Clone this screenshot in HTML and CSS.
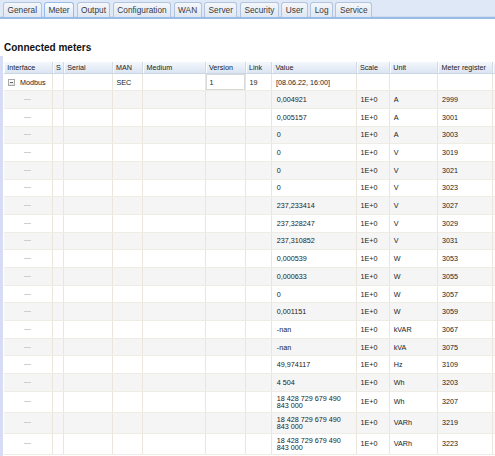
FILE: index.html
```html
<!DOCTYPE html>
<html>
<head>
<meta charset="utf-8">
<link rel="stylesheet" href="styles.css">
</head>
<body>
<div class="tabbar">
  <div class="tab">General</div>
  <div class="tab active">Meter</div>
  <div class="tab">Output</div>
  <div class="tab">Configuration</div>
  <div class="tab">WAN</div>
  <div class="tab">Server</div>
  <div class="tab">Security</div>
  <div class="tab">User</div>
  <div class="tab">Log</div>
  <div class="tab">Service</div>
</div>
<div class="content">
  <h1 class="title">Connected meters</h1>
  <div class="panel">
    <div class="grid">
      <div class="row head">
        <div class="c">Interface</div><div class="c">S</div><div class="c">Serial</div><div class="c">MAN</div><div class="c">Medium</div><div class="c">Version</div><div class="c">Link</div><div class="c">Value</div><div class="c">Scale</div><div class="c">Unit</div><div class="c">Meter register</div><div class="c"></div>
      </div>
      <div class="row top">
        <div class="c"><span class="exp"></span>Modbus</div><div class="c"></div><div class="c"></div><div class="c">SEC</div><div class="c"></div><div class="c boxed">1</div><div class="c">19</div><div class="c">[08.06.22, 16:00]</div><div class="c"></div><div class="c"></div><div class="c"></div><div class="c"></div>
      </div>
      <div class="row alt"><div class="c dash"><i></i></div><div class="c"></div><div class="c"></div><div class="c"></div><div class="c"></div><div class="c"></div><div class="c"></div><div class="c v">0,004921</div><div class="c">1E+0</div><div class="c">A</div><div class="c">2999</div><div class="c"></div></div>
      <div class="row"><div class="c dash"><i></i></div><div class="c"></div><div class="c"></div><div class="c"></div><div class="c"></div><div class="c"></div><div class="c"></div><div class="c v">0,005157</div><div class="c">1E+0</div><div class="c">A</div><div class="c">3001</div><div class="c"></div></div>
      <div class="row alt"><div class="c dash"><i></i></div><div class="c"></div><div class="c"></div><div class="c"></div><div class="c"></div><div class="c"></div><div class="c"></div><div class="c v">0</div><div class="c">1E+0</div><div class="c">A</div><div class="c">3003</div><div class="c"></div></div>
      <div class="row"><div class="c dash"><i></i></div><div class="c"></div><div class="c"></div><div class="c"></div><div class="c"></div><div class="c"></div><div class="c"></div><div class="c v">0</div><div class="c">1E+0</div><div class="c">V</div><div class="c">3019</div><div class="c"></div></div>
      <div class="row alt"><div class="c dash"><i></i></div><div class="c"></div><div class="c"></div><div class="c"></div><div class="c"></div><div class="c"></div><div class="c"></div><div class="c v">0</div><div class="c">1E+0</div><div class="c">V</div><div class="c">3021</div><div class="c"></div></div>
      <div class="row"><div class="c dash"><i></i></div><div class="c"></div><div class="c"></div><div class="c"></div><div class="c"></div><div class="c"></div><div class="c"></div><div class="c v">0</div><div class="c">1E+0</div><div class="c">V</div><div class="c">3023</div><div class="c"></div></div>
      <div class="row alt"><div class="c dash"><i></i></div><div class="c"></div><div class="c"></div><div class="c"></div><div class="c"></div><div class="c"></div><div class="c"></div><div class="c v">237,233414</div><div class="c">1E+0</div><div class="c">V</div><div class="c">3027</div><div class="c"></div></div>
      <div class="row"><div class="c dash"><i></i></div><div class="c"></div><div class="c"></div><div class="c"></div><div class="c"></div><div class="c"></div><div class="c"></div><div class="c v">237,328247</div><div class="c">1E+0</div><div class="c">V</div><div class="c">3029</div><div class="c"></div></div>
      <div class="row alt"><div class="c dash"><i></i></div><div class="c"></div><div class="c"></div><div class="c"></div><div class="c"></div><div class="c"></div><div class="c"></div><div class="c v">237,310852</div><div class="c">1E+0</div><div class="c">V</div><div class="c">3031</div><div class="c"></div></div>
      <div class="row"><div class="c dash"><i></i></div><div class="c"></div><div class="c"></div><div class="c"></div><div class="c"></div><div class="c"></div><div class="c"></div><div class="c v">0,000539</div><div class="c">1E+0</div><div class="c">W</div><div class="c">3053</div><div class="c"></div></div>
      <div class="row alt"><div class="c dash"><i></i></div><div class="c"></div><div class="c"></div><div class="c"></div><div class="c"></div><div class="c"></div><div class="c"></div><div class="c v">0,000633</div><div class="c">1E+0</div><div class="c">W</div><div class="c">3055</div><div class="c"></div></div>
      <div class="row"><div class="c dash"><i></i></div><div class="c"></div><div class="c"></div><div class="c"></div><div class="c"></div><div class="c"></div><div class="c"></div><div class="c v">0</div><div class="c">1E+0</div><div class="c">W</div><div class="c">3057</div><div class="c"></div></div>
      <div class="row alt"><div class="c dash"><i></i></div><div class="c"></div><div class="c"></div><div class="c"></div><div class="c"></div><div class="c"></div><div class="c"></div><div class="c v">0,001151</div><div class="c">1E+0</div><div class="c">W</div><div class="c">3059</div><div class="c"></div></div>
      <div class="row"><div class="c dash"><i></i></div><div class="c"></div><div class="c"></div><div class="c"></div><div class="c"></div><div class="c"></div><div class="c"></div><div class="c v">-nan</div><div class="c">1E+0</div><div class="c">kVAR</div><div class="c">3067</div><div class="c"></div></div>
      <div class="row alt"><div class="c dash"><i></i></div><div class="c"></div><div class="c"></div><div class="c"></div><div class="c"></div><div class="c"></div><div class="c"></div><div class="c v">-nan</div><div class="c">1E+0</div><div class="c">kVA</div><div class="c">3075</div><div class="c"></div></div>
      <div class="row"><div class="c dash"><i></i></div><div class="c"></div><div class="c"></div><div class="c"></div><div class="c"></div><div class="c"></div><div class="c"></div><div class="c v">49,974117</div><div class="c">1E+0</div><div class="c">Hz</div><div class="c">3109</div><div class="c"></div></div>
      <div class="row alt"><div class="c dash"><i></i></div><div class="c"></div><div class="c"></div><div class="c"></div><div class="c"></div><div class="c"></div><div class="c"></div><div class="c v">4 504</div><div class="c">1E+0</div><div class="c">Wh</div><div class="c">3203</div><div class="c"></div></div>
      <div class="row tall"><div class="c dash"><i></i></div><div class="c"></div><div class="c"></div><div class="c"></div><div class="c"></div><div class="c"></div><div class="c"></div><div class="c v wrap">18 428 729 679 490 843 000</div><div class="c">1E+0</div><div class="c">Wh</div><div class="c">3207</div><div class="c"></div></div>
      <div class="row tall alt"><div class="c dash"><i></i></div><div class="c"></div><div class="c"></div><div class="c"></div><div class="c"></div><div class="c"></div><div class="c"></div><div class="c v wrap">18 428 729 679 490 843 000</div><div class="c">1E+0</div><div class="c">VARh</div><div class="c">3219</div><div class="c"></div></div>
      <div class="row tall"><div class="c dash"><i></i></div><div class="c"></div><div class="c"></div><div class="c"></div><div class="c"></div><div class="c"></div><div class="c"></div><div class="c v wrap">18 428 729 679 490 843 000</div><div class="c">1E+0</div><div class="c">VARh</div><div class="c">3223</div><div class="c"></div></div>
    </div>
  </div>
</div>
</body>
</html>
```
FILE: styles.css
```css
html, body {
  margin: 0;
  padding: 0;
  background: #fff;
  overflow: hidden;
}
body {
  font-family: "Liberation Sans", Arial, sans-serif;
  color: #222;
  width: 495px;
  height: 456px;
}
.tabbar {
  height: 17px;
  background: #dfe8f6;
  border-bottom: 2px solid #99bbe8;
  display: flex;
  align-items: flex-end;
  gap: 2.4px;
  padding-left: 3px;
  box-shadow: inset 0 -1px 0 #cfdcee;
}
.tab {
  line-height: 14px;
  font-size: 8.3px;
  padding: 0 3.5px;
  color: #3a3a3a;
  border: 1px solid #b3c5de;
  border-bottom: none;
  border-radius: 3px 3px 0 0;
  background: linear-gradient(#f4f7fb, #dfe7f2);
  height: 14px;
}
.tab.active {
  border-color: #99bbe8;
  background: linear-gradient(#fafcff, #dce7f7);
}
.content {
  padding-top: 23px;
}
.title {
  margin: 0 0 2px 4px;
  font-size: 10px;
  line-height: 12px;
  font-weight: bold;
  color: #111;
}
.panel {
  border-left: 3px solid #d6dcf4;
  padding: 5.75px 0 0 1px;
  height: 400px;
  overflow: hidden;
}
.grid {
  width: 540px;
}
.row {
  display: grid;
  grid-template-columns: 48.7px 11.3px 48.7px 30.6px 62.4px 40px 26.6px 84.4px 33.3px 48.3px 55.2px 40px;
  height: 17.7px;
  box-sizing: border-box;
  border-bottom: 1px solid #efece6;
  font-size: 7.2px;
}
.row.alt {
  background: #f5f5f5;
}
.row.top {
  height: 16.9px;
}
.row.tall {
  height: 21px;
}
.row.head {
  height: 12.5px;
  background: linear-gradient(#f5f8fd, #dae4f2);
  border-bottom: 1px solid #cdd6e3;
}
.c {
  box-sizing: border-box;
  border-right: 1px solid #ebe6dc;
  padding-left: 3.8px;
  display: flex;
  align-items: center;
  white-space: nowrap;
  overflow: hidden;
}
.head .c {
  border-right: 1px solid #d2d9e4;
  box-shadow: inset 1px 0 0 #f8fbff;
  padding-left: 3.3px;
  color: #1a1a1a;
}
.c.v {
  padding-left: 4.6px;
}
.c.wrap {
  white-space: normal;
  line-height: 7.3px;
  padding-right: 4px;
}
.c.boxed {
  box-shadow: inset 0 0 0 1px #d9d9d9;
  background: #fff;
}
.c.dash {
  justify-content: center;
  padding-left: 0;
}
.c.dash i {
  display: block;
  width: 7px;
  height: 1px;
  background: #cfcfcf;
}
.exp {
  width: 7px;
  height: 7px;
  box-sizing: border-box;
  border: 1px solid #a9a9a9;
  background: linear-gradient(#ffffff, #e4e4e4);
  margin: 0 4.5px 0 0.7px;
  display: flex;
  align-items: center;
  justify-content: center;
}
.exp::before {
  content: "";
  width: 3px;
  height: 1px;
  background: #666;
}
```
